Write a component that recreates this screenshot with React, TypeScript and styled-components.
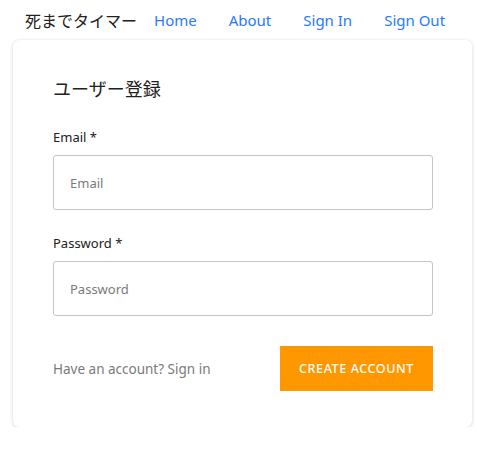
import React from "react";
import styled, { createGlobalStyle } from "styled-components";

const Global = createGlobalStyle`
  html, body { margin: 0; padding: 0; background: #fff; }
  body {
    font-family: "Noto Sans", "Noto Sans CJK JP", sans-serif;
    color: #212121;
  }
  * { box-sizing: border-box; }
`;

const Page = styled.div`
  width: 477px;
  padding: 0 5px 0 13px;
`;

const Header = styled.header`
  display: flex;
  align-items: center;
  height: 40px;
  padding-left: 12px;
  white-space: nowrap;
`;

const Brand = styled.div`
  font-size: 16px;
  color: #212121;
  font-family: "Noto Sans CJK JP", sans-serif;
  margin-right: 1px;
  flex-shrink: 0;
`;

const NavLink = styled.a`
  font-size: 15px;
  color: #2979ff;
  text-decoration: none;
  padding: 0 16px;
  flex-shrink: 0;
  white-space: nowrap;
`;

const Card = styled.main`
  background: #fff;
  border-radius: 6px;
  box-shadow: 0 1px 4px rgba(0, 0, 0, 0.14), 0 0 2px rgba(0, 0, 0, 0.06);
  padding: 35px 39px 36px 40px;
  display: flex;
  flex-direction: column;
`;

const Title = styled.h1`
  margin: 0 0 26px;
  font-size: 18px;
  font-weight: 400;
  font-family: "Noto Sans CJK JP", sans-serif;
  color: #212121;
  line-height: 26px;
`;

const Field = styled.div`
  display: flex;
  flex-direction: column;
  margin-bottom: 23px;
`;

const Label = styled.label`
  font-size: 13px;
  color: #212121;
  line-height: 20px;
  margin-bottom: 8px;
`;

const Input = styled.input`
  height: 55px;
  border: 1px solid #c4c4c4;
  border-radius: 3px;
  padding: 0 16px;
  font-family: inherit;
  font-size: 13px;
  color: #212121;
  outline: none;
  &::placeholder { color: #7a7a7a; }
`;

const Footer = styled.div`
  display: flex;
  align-items: center;
  justify-content: space-between;
  margin-top: 7px;
`;

const Hint = styled.span`
  font-size: 13.5px;
  color: #7a7a7a;
`;

const Button = styled.button`
  width: 153px;
  height: 45px;
  border: none;
  background: #ff9800;
  color: #fff;
  font-family: inherit;
  font-size: 12.5px;
  font-weight: 500;
  letter-spacing: 0.6px;
  text-transform: uppercase;
  cursor: pointer;
`;

export default function App() {
  return (
    <Page>
      <Global />
      <Header>
        <Brand>死までタイマー</Brand>
        <NavLink href="#">Home</NavLink>
        <NavLink href="#">About</NavLink>
        <NavLink href="#">Sign In</NavLink>
        <NavLink href="#">Sign Out</NavLink>
      </Header>
      <Card>
        <Title>ユーザー登録</Title>
        <Field>
          <Label>Email *</Label>
          <Input placeholder="Email" />
        </Field>
        <Field>
          <Label>Password *</Label>
          <Input type="password" placeholder="Password" />
        </Field>
        <Footer>
          <Hint>Have an account? Sign in</Hint>
          <Button>Create Account</Button>
        </Footer>
      </Card>
    </Page>
  );
}
